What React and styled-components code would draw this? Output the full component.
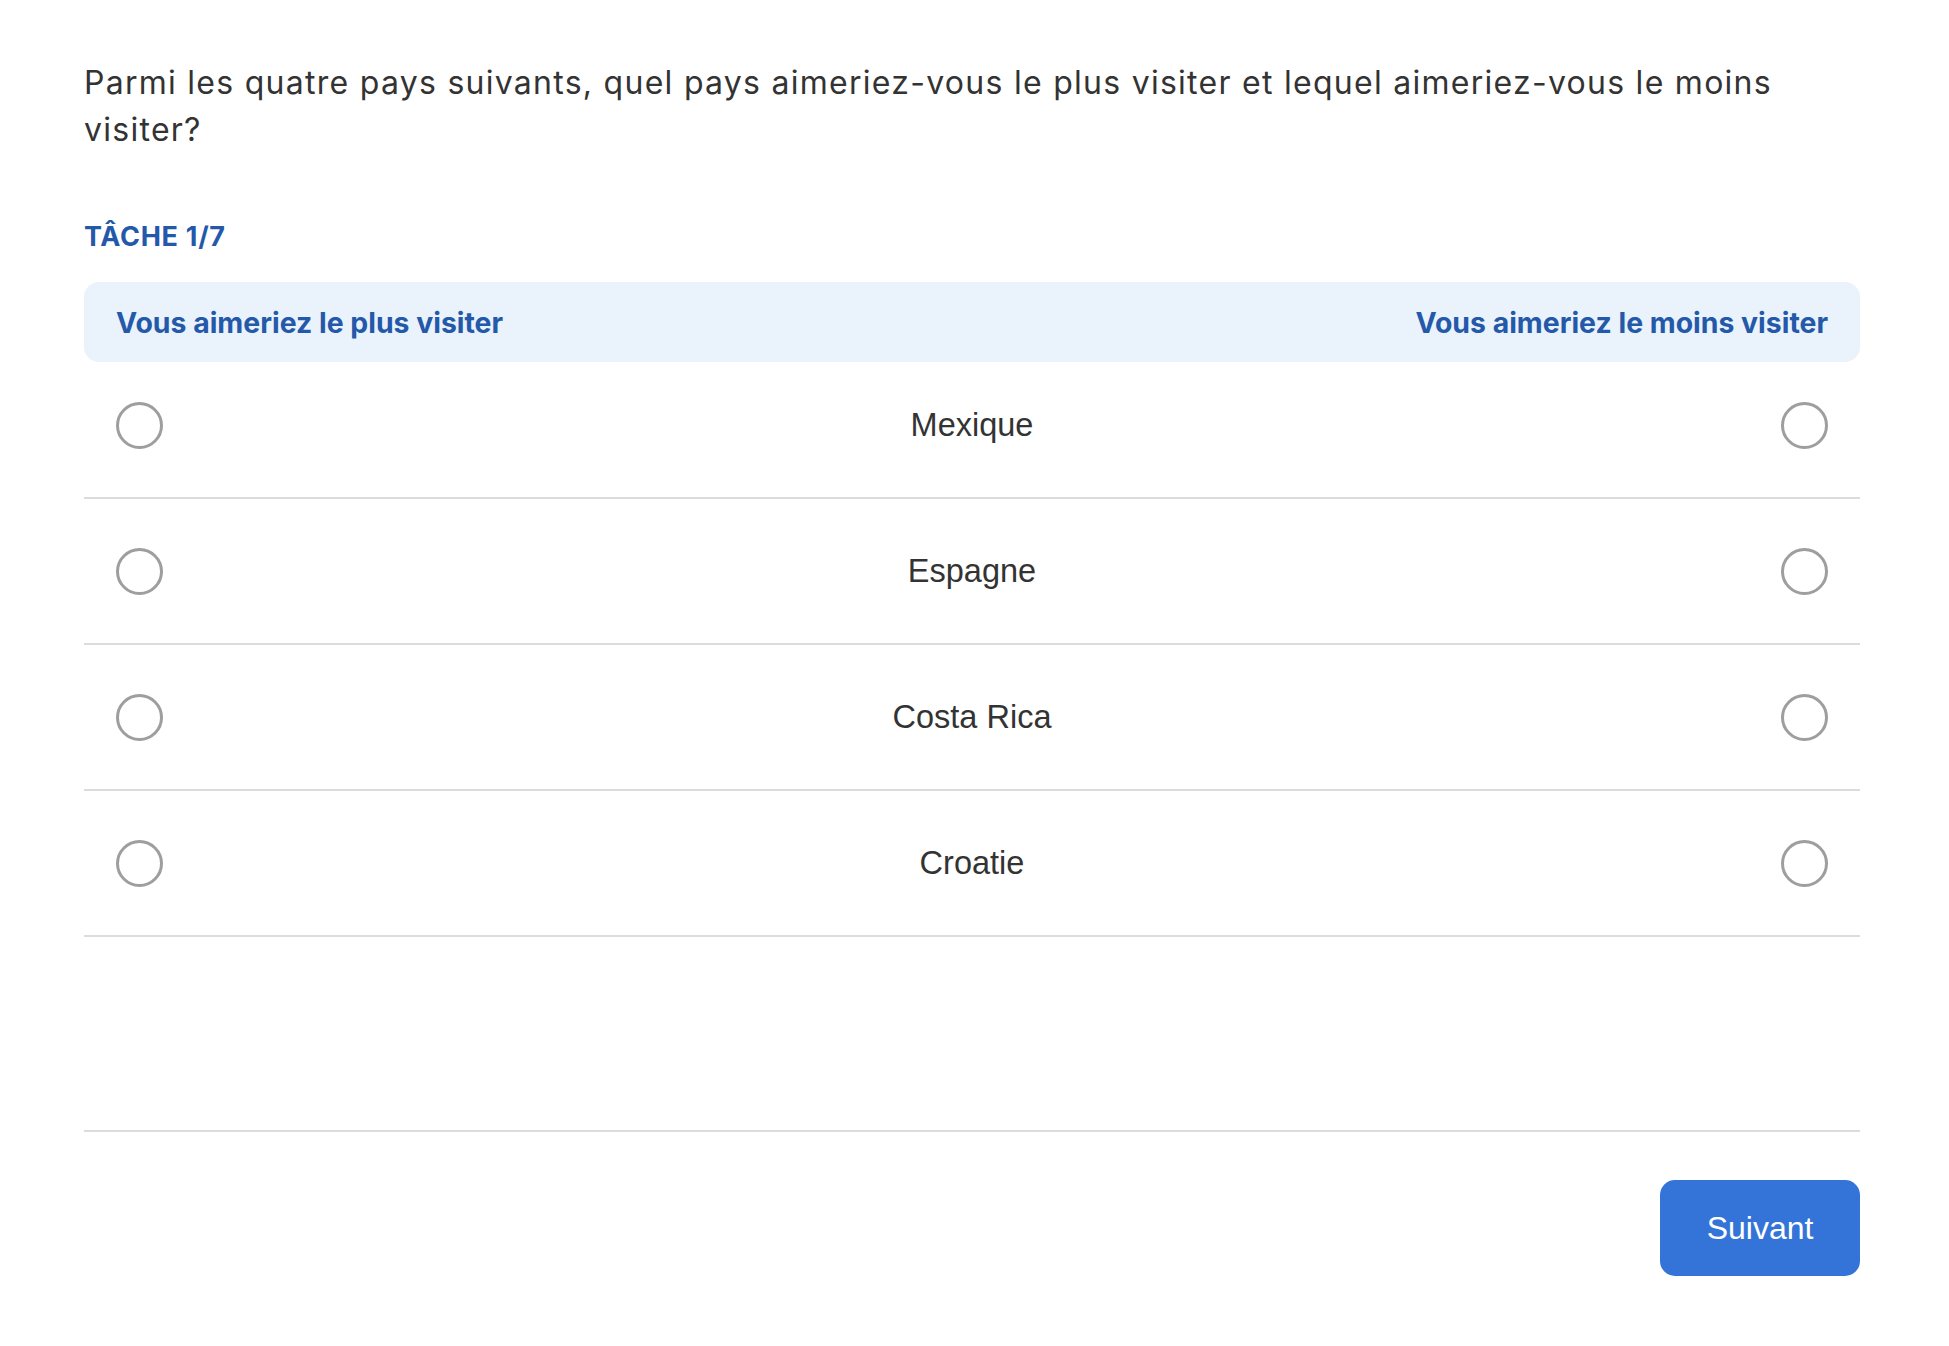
import React, { useState } from 'react'
import styled, { createGlobalStyle } from 'styled-components'

const GlobalStyle = createGlobalStyle`
  body {
    margin: 0;
    background: #ffffff;
    font-family: "Liberation Sans", Arial, sans-serif;
    color: #333333;
  }
`

const countries = ['Mexique', 'Espagne', 'Costa Rica', 'Croatie'];

const App = () => {
  const [best, setBest] = useState(null);
  const [worst, setWorst] = useState(null);

  return (
    <>
      <GlobalStyle />
      <Page>
        <Question>
          Parmi les quatre pays suivants, quel pays aimeriez-vous le plus visiter et lequel aimeriez-vous le moins visiter?
        </Question>
        <TaskLabel>TÂCHE 1/7</TaskLabel>
        <TableHead>
          <HeadLabel>Vous aimeriez le plus visiter</HeadLabel>
          <HeadLabel>Vous aimeriez le moins visiter</HeadLabel>
        </TableHead>
        <List>
          {countries.map((name, i) => (
            <Row key={name} $first={i === 0}>
              <Radio
                type="button"
                aria-label={`${name} - plus`}
                $checked={best === i}
                onClick={() => setBest(i)}
              />
              <Country>{name}</Country>
              <Radio
                type="button"
                aria-label={`${name} - moins`}
                $checked={worst === i}
                onClick={() => setWorst(i)}
              />
            </Row>
          ))}
        </List>
        <Footer>
          <NextButton type="button">Suivant</NextButton>
        </Footer>
      </Page>
    </>
  )
}

export default App;

const Page = styled.div`
  width: 1776px;
  padding: 60px 0 60px 84px;
`

const Question = styled.p`
  margin: 0;
  font-family: Inter, "Liberation Sans", sans-serif;
  font-size: 32px;
  line-height: 46.5px;
  letter-spacing: 1.27px;
  color: #333333;
`

const TaskLabel = styled.div`
  margin-top: 69px;
  font-family: Inter, "Liberation Sans", sans-serif;
  font-weight: 700;
  font-size: 27px;
  line-height: 30px;
  letter-spacing: 0.7px;
  color: #2459aa;
`

const TableHead = styled.div`
  margin-top: 30px;
  height: 80px;
  padding: 0 32px;
  display: flex;
  align-items: center;
  justify-content: space-between;
  background: #eaf2fb;
  border-radius: 15px;
`

const HeadLabel = styled.span`
  font-family: Inter, "Liberation Sans", sans-serif;
  font-weight: 700;
  font-size: 28.4px;
  color: #2459aa;
`

const List = styled.div`
  display: flex;
  flex-direction: column;
`

const Row = styled.div`
  height: ${props => props.$first ? '127px' : '144px'};
  padding: 0 32px ${props => props.$first ? '8px' : '0'};
  display: grid;
  grid-template-columns: 47px 1fr 47px;
  align-items: center;
  border-bottom: 2px solid #dcdcdc;
`

const Radio = styled.button`
  width: 47px;
  height: 47px;
  padding: 0;
  border-radius: 50%;
  border: 3.5px solid #9e9e9e;
  background: ${props => props.$checked ? 'radial-gradient(circle, #3474d8 0 9px, #fff 10px)' : '#ffffff'};
  cursor: pointer;
`

const Country = styled.span`
  text-align: center;
  font-size: 32.5px;
  color: #333333;
`

const Footer = styled.div`
  margin-top: 193px;
  padding-top: 48px;
  border-top: 2px solid #dcdcdc;
  display: flex;
  justify-content: flex-end;
`

const NextButton = styled.button`
  width: 200px;
  height: 96px;
  border: none;
  border-radius: 15px;
  background: #3474d8;
  color: #ffffff;
  font-family: "Liberation Sans", Arial, sans-serif;
  font-size: 32px;
  cursor: pointer;
`
